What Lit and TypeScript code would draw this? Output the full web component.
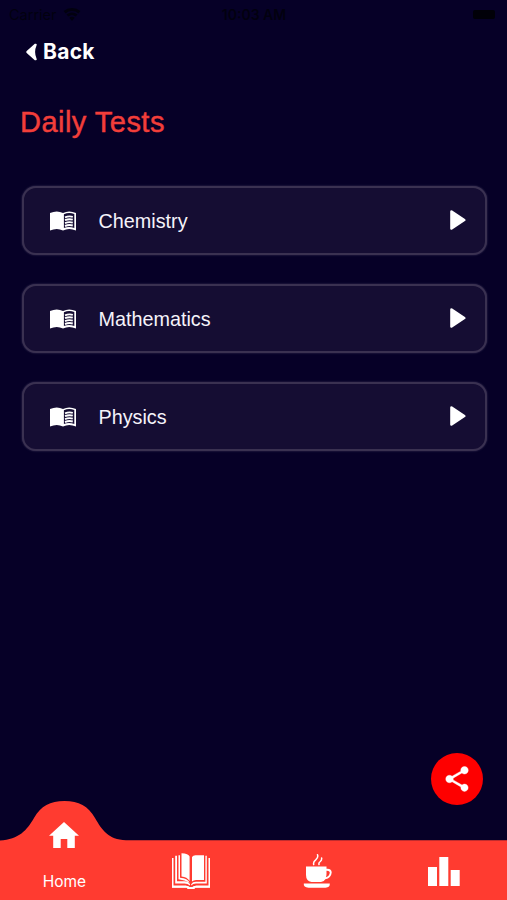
import { LitElement, html, css } from "lit";
import { customElement, state } from "lit/decorators.js";

const wifiIcon = html`<svg class="wifi" viewBox="0 0 18 13"><path d="M9 13L6.3 9.8a4.2 4.2 0 0 1 5.4 0zM5.3 8.6L3.5 6.5a8.6 8.6 0 0 1 11 0L12.700 8.600a5.700 5.700 0 0 0-7.400 0zM2.600 5.400L.6 3.100a13 13 0 0 1 16.800 0l-2 2.300a10 10 0 0 0-12.800 0z"/></svg>`;

const backIcon = html`<svg class="chevron" viewBox="0 0 11 18"><path d="M8.800 .8Q11.300 .2 10.600 2.200Q7.600 9 10.600 15.800Q11.300 17.800 8.800 17.200L.7 10Q-.2 9 .7 8Z"/></svg>`;

const subjectIcon = html`<svg class="subject" viewBox="0 0 26 20">
  <path fill="#fff" d="M0 2Q7-1 13 2Q19-1 26 2V19.500Q19 16.500 13 19.500Q7 16.500 0 19.500Z"/>
  <path fill="#150d33" d="M13.900 3.200Q19 1 24.300 3V17Q19 15.200 13.900 17Z"/>
  <path fill="none" stroke="#fff" stroke-width="1.900" d="M15 6.300Q19 4.700 22.800 5.800M15 9.200Q19 7.600 22.800 8.700M15 12.100Q19 10.500 22.800 11.600M15 15Q19 13.400 22.800 14.500"/>
</svg>`;

const playIcon = html`<svg class="play" viewBox="0 0 16 20"><path d="M1.500 1.500L14.200 10L1.500 18.500Z"/></svg>`;

const shareIcon = html`<svg class="share" viewBox="0 0 24 24"><path d="M18 16.080c-.76 0-1.440.3-1.960.77L8.910 12.700c.05-.23.09-.46.09-.7s-.04-.47-.09-.7l7.050-4.110c.54.5 1.250.81 2.040.81 1.660 0 3-1.340 3-3s-1.340-3-3-3-3 1.340-3 3c0 .24.040.47.090.7L8.040 9.810C7.500 9.310 6.790 9 6 9c-1.660 0-3 1.340-3 3s1.340 3 3 3c.79 0 1.500-.31 2.040-.81l7.120 4.160c-.05.21-.08.43-.08.650 0 1.610 1.310 2.920 2.920 2.920s2.920-1.310 2.920-2.920-1.310-2.920-2.920-2.920z"/></svg>`;

const homeIcon = html`<svg class="home" viewBox="0 0 30 26"><path d="M15 0L30 13.700H25.800V26H18.300V17H11.700V26H4.200V13.700H0Z"/></svg>`;

const booksIcon = html`<svg class="books" viewBox="0 0 38 36">
  <path d="M0 5H1.500V33H15.500Q17 33 17.500 34H20.500Q21 33 22.500 33H36.500V5H38V34.800H24Q22.800 34.800 22.500 36H15.500Q15.200 34.800 14 34.800H0Z"/>
  <path d="M0 32.500H14.500V34.500H0ZM23.500 32.500H38V34.500H23.500Z"/>
  <path d="M3.200 2.800H5V28.300H12.500Q16.500 28.500 18 31.200V32.500Q15.500 30.600 12.500 30.600H3.200Z"/>
  <path d="M34.800 2.800H33.400V28.800H24Q20.500 28.800 19.200 31.200V32.500Q21 30.600 24 30.600H34.800Z"/>
  <path d="M6.500 26.300V2.200H8V24.800Q15.500 25.500 17.700 29.800Q13 26.800 6.500 26.300Z"/>
  <path d="M9.500 .3Q16.500 .5 17.600 3.500V28Q15 24 9.500 23.600Z"/>
  <path d="M20 4Q21 2.300 23.500 2.300H32V27H24Q21.500 27 20 28.500Z"/>
</svg>`;

const cupIcon = html`<svg class="cup" viewBox="0 0 29 34">
  <path d="M3 12.500H23.500V14.700Q28.700 14.300 28.700 18.500Q28.200 24 22.300 25.300Q21 28 18 28H8.500Q3 27 3 21ZM23.500 16.700V20Q23.500 22 22.900 23.200Q26.600 22 26.800 18.500Q26.700 16.500 23.500 16.700Z"/>
  <path d="M.8 29.500H26.800Q27.300 33.500 22.500 33.700H5.500Q.3 33.500 .8 29.500Z"/>
  <path class="steam" d="M10.700 10.500Q10 8 12.700 5.900Q15.500 3.500 14.500 .8M16 10.500Q15.500 8.700 17.300 7.500Q19 6 18.600 4"/>
</svg>`;

const chartIcon = html`<svg class="chart" viewBox="0 0 32 29"><path d="M0 10H9V29H0ZM11.300 0H20.300V29H11.300ZM22.700 13H31.700V29H22.700Z"/></svg>`;

@customElement("subject-card")
export class SubjectCard extends LitElement {
  static properties = { name: {} };
  declare name: string;

  static styles = css`
    :host { display: block; }
    .card {
      box-sizing: border-box;
      width: 465px;
      height: 69px;
      border: 2px solid #3a3151;
      border-radius: 14px;
      background: #150d33;
      box-shadow: 0 0 2px #40375c;
      display: flex;
      align-items: center;
      padding: 0 19px 0 26px;
      color: #f5f3fa;
      font: 19.800px/24px "Liberation Sans", sans-serif;
    }
    .subject { width: 26px; height: 20px; margin-right: 23px; }
    .label { flex: 1; padding-top: 1px; }
    .play { width: 16px; height: 20px; margin-top: -2px; fill: #fff; stroke: #fff; stroke-width: 2.600; stroke-linejoin: round; }
  `;

  render() {
    return html`<div class="card">${subjectIcon}<span class="label">${this.name}</span>${playIcon}</div>`;
  }
}

@customElement("app-root")
export class AppRoot extends LitElement {
  @state() private subjects = ["Chemistry", "Mathematics", "Physics"];

  static styles = css`
    :host {
      display: flex;
      flex-direction: column;
      position: relative;
      width: 507px;
      height: 900px;
      overflow: hidden;
      background: #060027;
      font-family: "Liberation Sans", Arial, sans-serif;
    }
    .status {
      height: 28px;
      display: grid;
      grid-template-columns: 1fr auto 1fr;
      align-items: center;
      padding: 0 12px 0 9px;
      color: #02000f;
      font: 14.500px "Inter", sans-serif;
    }
    .carrier { display: flex; align-items: center; gap: 6px; }
    .time { font-weight: 600; font-size: 14px; padding-left: 4px; }
    .wifi { width: 18px; height: 13px; fill: #02000f; }
    .battery { justify-self: end; width: 22px; height: 9px; border-radius: 2px; background: #010008; }
    .back {
      display: flex;
      align-items: center;
      gap: 6px;
      height: 48px;
      padding-left: 26px;
      color: #fff;
      font: 700 21px/48px "Inter", sans-serif;
      letter-spacing: 0.300px;
    }
    .chevron { width: 11px; height: 18px; fill: #fff; }
    h1 {
      margin: 28px 0 0 20px;
      color: #f23e3a;
      font-size: 29px;
      line-height: 36px;
      font-weight: 400;
      letter-spacing: 0.470px;
      -webkit-text-stroke: 0.450px #f23e3a;
    }
    .list {
      display: flex;
      flex-direction: column;
      gap: 29px;
      margin: 46px 0 0 21.500px;
    }
    .fab {
      position: absolute;
      right: 24px;
      bottom: 95px;
      width: 52px;
      height: 52px;
      border-radius: 50%;
      background: #fe0000;
      display: flex;
      align-items: center;
      justify-content: center;
    }
    .share { width: 30px; height: 30px; fill: #fff; stroke: #fff; stroke-width: 0.300; }
    .nav {
      position: relative;
      margin-top: auto;
      height: 99px;
      display: grid;
      grid-template-columns: repeat(4, 1fr);
    }
    .shape { position: absolute; inset: 0; width: 507px; height: 99px; fill: #ff3b30; }
    .tab {
      position: relative;
      display: flex;
      flex-direction: column;
      align-items: center;
      color: #fff;
      fill: #fff;
    }
    .home { width: 30px; height: 26px; margin: 21px 0 0 2px; }
    .tab span { font: 15.500px/20px "Inter", sans-serif; margin: 24px 0 0 2px; }
    .books { width: 38px; height: 36px; margin: 52px 0 0 1px; }
    .cup { width: 29px; height: 34px; margin: 53px 0 0 2px; }
    .steam { fill: none; stroke: #fff; stroke-width: 1.500; stroke-linecap: round; }
    .chart { width: 32px; height: 29px; margin-top: 55.500px; }
  `;

  render() {
    return html`
      <div class="status">
        <div class="carrier"><span>Carrier</span>${wifiIcon}</div>
        <div class="time">10:03 AM</div>
        <div class="battery"></div>
      </div>
      <div class="back">${backIcon}<span>Back</span></div>
      <h1>Daily Tests</h1>
      <div class="list">
        ${this.subjects.map((name) => html`<subject-card .name=${name}></subject-card>`)}
      </div>
      <div class="fab">${shareIcon}</div>
      <div class="nav">
        <svg class="shape" viewBox="0 0 507 99"><path d="M0 39.500C19 38.500 27 29 34 17C41 5 50 0 64.500 0C79 0 88 5 95 17C102 29 108 38.500 126 39.300H507V99H0Z"/></svg>
        <div class="tab">${homeIcon}<span>Home</span></div>
        <div class="tab">${booksIcon}</div>
        <div class="tab">${cupIcon}</div>
        <div class="tab">${chartIcon}</div>
      </div>
    `;
  }
}
